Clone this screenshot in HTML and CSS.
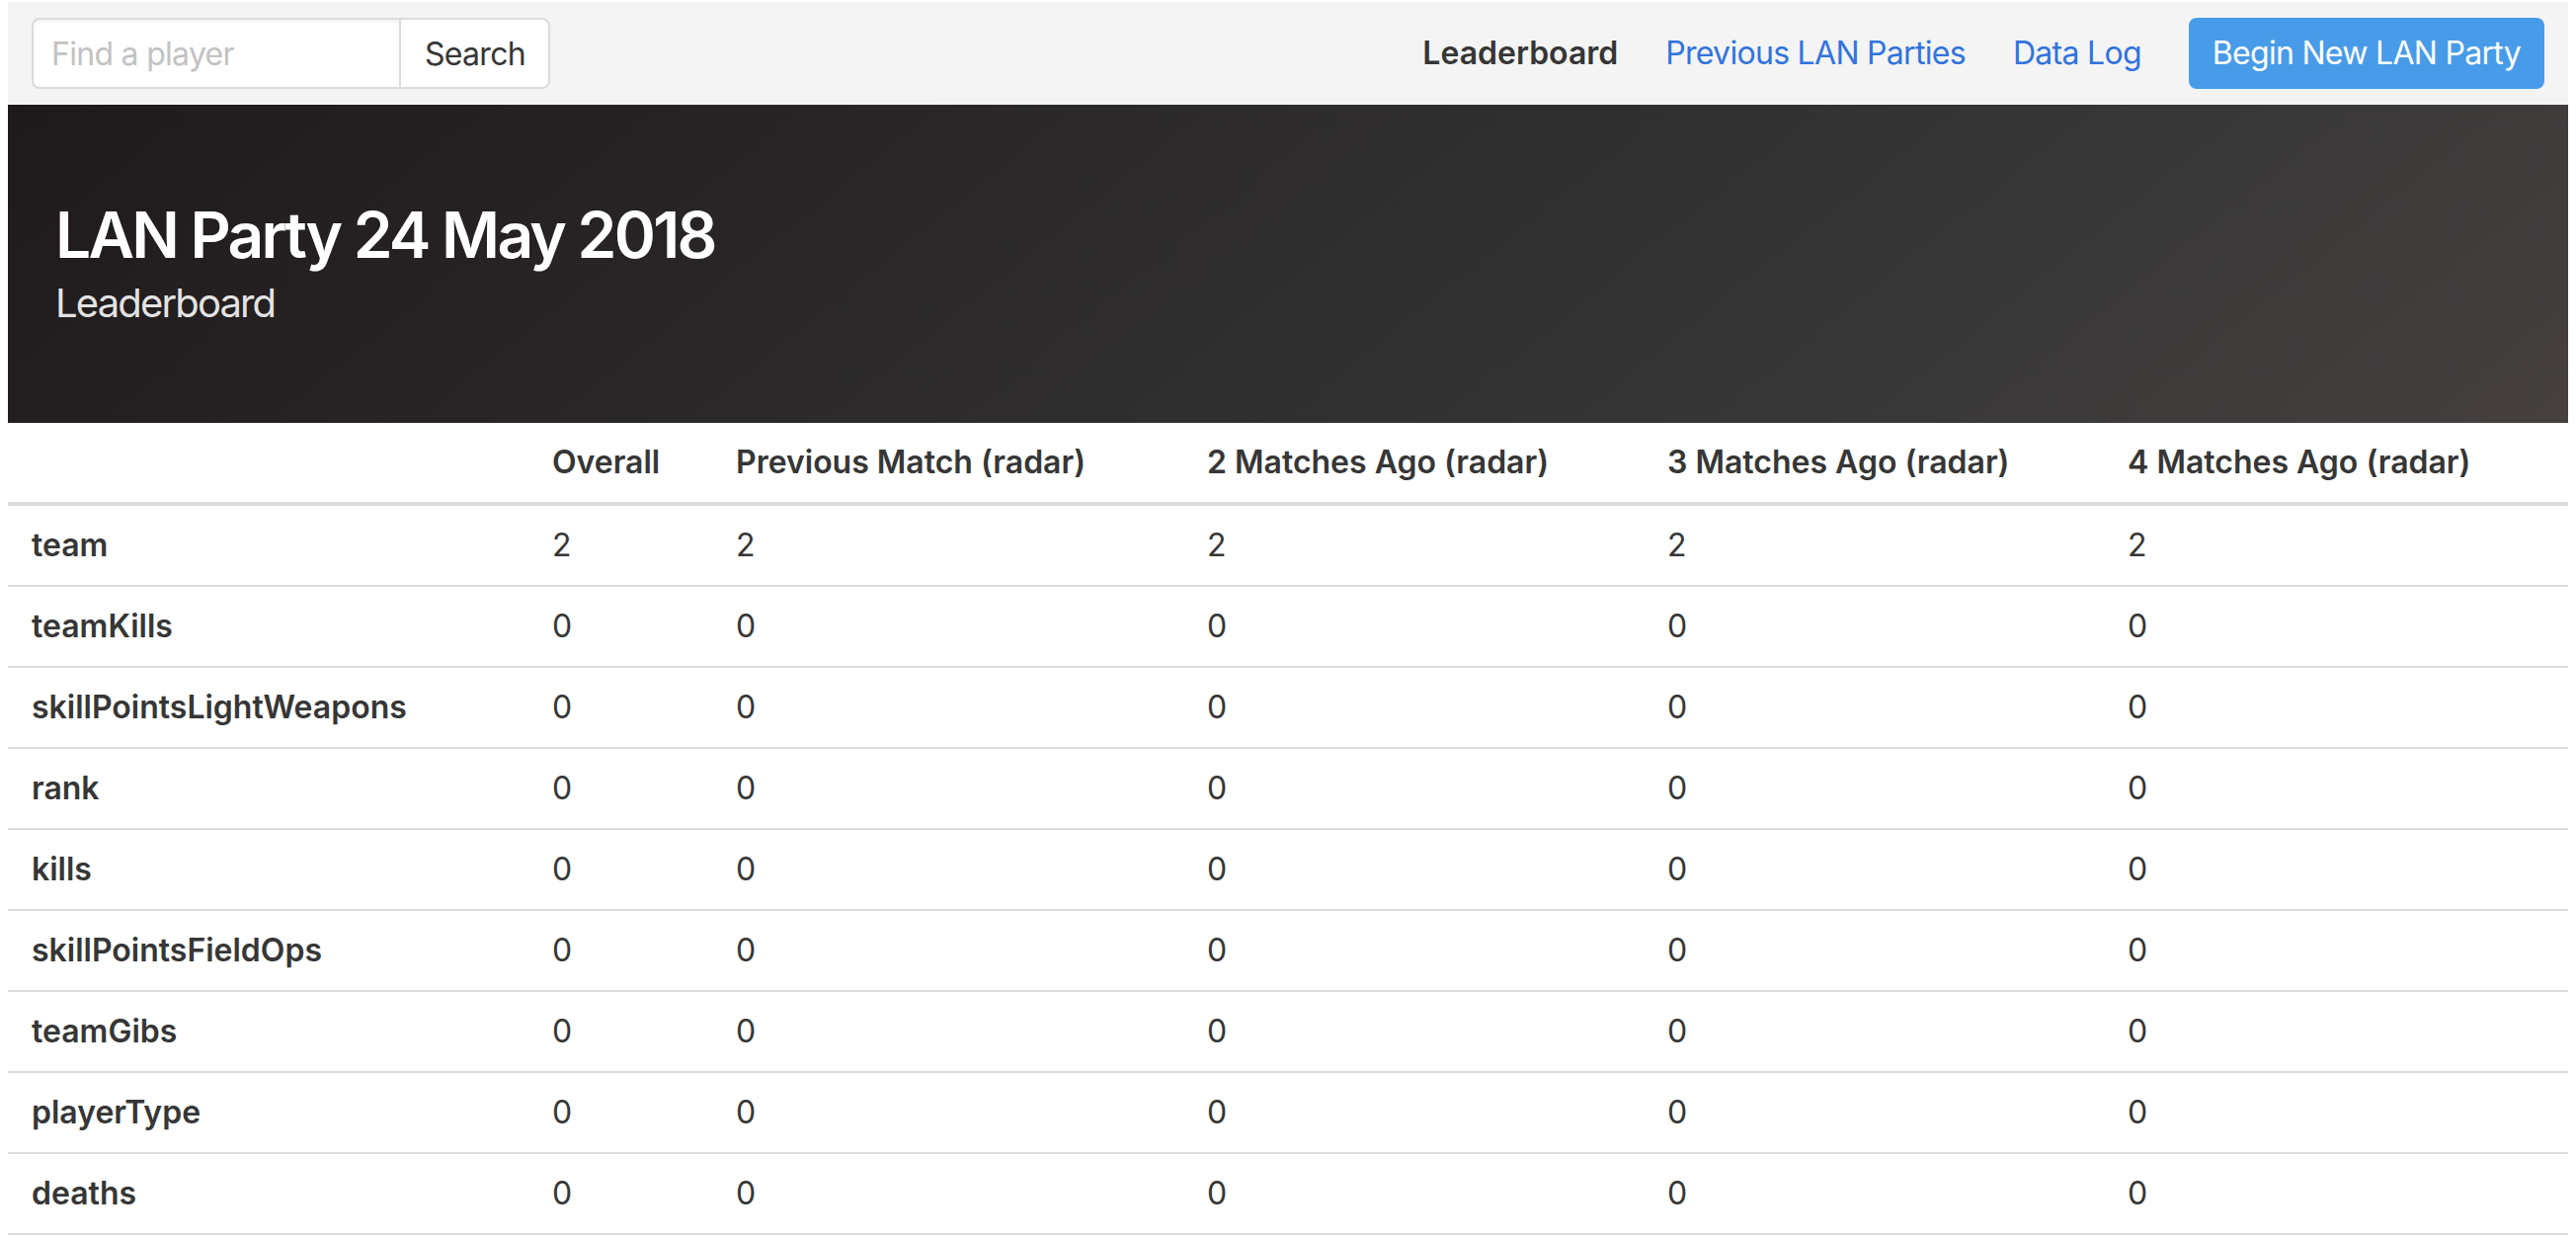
FILE: index.html
```html
<!DOCTYPE html>
<html lang="en">
<head>
<meta charset="utf-8">
<title>LAN Party 24 May 2018 - Leaderboard</title>
<link rel="stylesheet" href="styles.css">
</head>
<body>
<div class="page">
  <nav class="navbar">
    <div class="navbar-start">
      <div class="navbar-item">
        <form class="search">
          <input class="search-input" type="text" placeholder="Find a player">
          <button class="search-button" type="button">Search</button>
        </form>
      </div>
    </div>
    <div class="navbar-end">
      <a class="navbar-item is-active">Leaderboard</a>
      <a class="navbar-item is-link">Previous LAN Parties</a>
      <a class="navbar-item is-link">Data Log</a>
      <div class="navbar-item">
        <a class="button-primary">Begin New LAN Party</a>
      </div>
    </div>
  </nav>

  <section class="hero">
    <div class="hero-body">
      <h1 class="title">LAN Party 24 May 2018</h1>
      <h2 class="subtitle">Leaderboard</h2>
    </div>
  </section>

  <table class="board">
    <colgroup>
      <col class="col-name">
      <col class="col-overall">
      <col class="col-prev">
      <col class="col-m2">
      <col class="col-m3">
      <col class="col-m4">
    </colgroup>
    <thead>
      <tr>
        <th></th>
        <th>Overall</th>
        <th>Previous Match (radar)</th>
        <th>2 Matches Ago (radar)</th>
        <th>3 Matches Ago (radar)</th>
        <th>4 Matches Ago (radar)</th>
      </tr>
    </thead>
    <tbody>
      <tr><th>team</th><td>2</td><td>2</td><td>2</td><td>2</td><td>2</td></tr>
      <tr><th>teamKills</th><td>0</td><td>0</td><td>0</td><td>0</td><td>0</td></tr>
      <tr><th>skillPointsLightWeapons</th><td>0</td><td>0</td><td>0</td><td>0</td><td>0</td></tr>
      <tr><th>rank</th><td>0</td><td>0</td><td>0</td><td>0</td><td>0</td></tr>
      <tr><th>kills</th><td>0</td><td>0</td><td>0</td><td>0</td><td>0</td></tr>
      <tr><th>skillPointsFieldOps</th><td>0</td><td>0</td><td>0</td><td>0</td><td>0</td></tr>
      <tr><th>teamGibs</th><td>0</td><td>0</td><td>0</td><td>0</td><td>0</td></tr>
      <tr><th>playerType</th><td>0</td><td>0</td><td>0</td><td>0</td><td>0</td></tr>
      <tr><th>deaths</th><td>0</td><td>0</td><td>0</td><td>0</td><td>0</td></tr>
    </tbody>
  </table>
</div>
</body>
</html>
```

FILE: styles.css
```css
html, body {
  margin: 0;
  padding: 0;
  background: #ffffff;
}

body {
  font-family: Inter, "Noto Sans", Roboto, "Liberation Sans", sans-serif;
  font-size: 32px;
  line-height: 1.5;
  color: #363636;
}

.page {
  padding: 2px 8px 0 8px;
}

/* Navbar */
.navbar {
  display: flex;
  justify-content: space-between;
  align-items: stretch;
  height: 104px;
  background: #f4f4f4;
}

.navbar-start,
.navbar-end {
  display: flex;
  align-items: stretch;
}

.navbar-item {
  display: flex;
  align-items: center;
  padding: 16px 24px;
  line-height: 48px;
  color: #4a4a4a;
  text-decoration: none;
  white-space: nowrap;
  letter-spacing: -0.022em;
}

.navbar-item.is-active {
  font-weight: 600;
  color: #363636;
  letter-spacing: 0;
}

.navbar-item.is-link {
  color: #3273dc;
}

.search {
  display: flex;
  margin: 0;
}

.search-input {
  box-sizing: border-box;
  width: 372px;
  height: 72px;
  margin: 0;
  padding: 0 18px;
  border: 2px solid #dbdbdb;
  border-right: none;
  border-radius: 8px 0 0 8px;
  background: #ffffff;
  box-shadow: inset 0 2px 4px rgba(10, 10, 10, 0.06);
  font-family: inherit;
  font-size: 32px;
  letter-spacing: -0.022em;
  color: #363636;
  outline: none;
}

.search-input::placeholder {
  color: #c2c2c2;
}

.search-button {
  box-sizing: border-box;
  width: 153px;
  height: 72px;
  margin: 0;
  padding: 0 24px;
  border: 2px solid #dbdbdb;
  border-radius: 0 8px 8px 0;
  background: #ffffff;
  font-family: inherit;
  font-size: 32px;
  letter-spacing: -0.022em;
  color: #363636;
}

.button-primary {
  display: flex;
  align-items: center;
  box-sizing: border-box;
  height: 72px;
  padding: 0 24px;
  border-radius: 8px;
  background: #489be8;
  color: #ffffff;
  text-decoration: none;
}

/* Hero */
.hero {
  background-color: #363636;
  background-image: linear-gradient(141deg, #1f191a 0%, #363636 71%, #46403f 100%);
}

.hero-body {
  padding: 96px 48px;
}

.title {
  margin: 0;
  font-size: 64px;
  font-weight: 600;
  line-height: 72px;
  letter-spacing: -0.043em;
  color: #ffffff;
}

.subtitle {
  margin: 8px 0 0 0;
  font-size: 40px;
  font-weight: 400;
  line-height: 50px;
  letter-spacing: -0.046em;
  color: rgba(255, 255, 255, 0.9);
}

/* Table */
.board {
  width: 2592px;
  table-layout: fixed;
  border-collapse: collapse;
  border-spacing: 0;
}

.col-name { width: 527px; }
.col-overall { width: 186px; }
.col-prev { width: 477px; }
.col-m2 { width: 466px; }
.col-m3 { width: 466px; }
.col-m4 { width: 470px; }

.board th,
.board td {
  padding: 16px 24px;
  line-height: 48px;
  text-align: left;
  vertical-align: top;
  border-bottom: 2px solid #dbdbdb;
  white-space: nowrap;
}

.board th {
  font-weight: 600;
  color: #363636;
}

.board thead th {
  border-bottom-width: 4px;
}
```
